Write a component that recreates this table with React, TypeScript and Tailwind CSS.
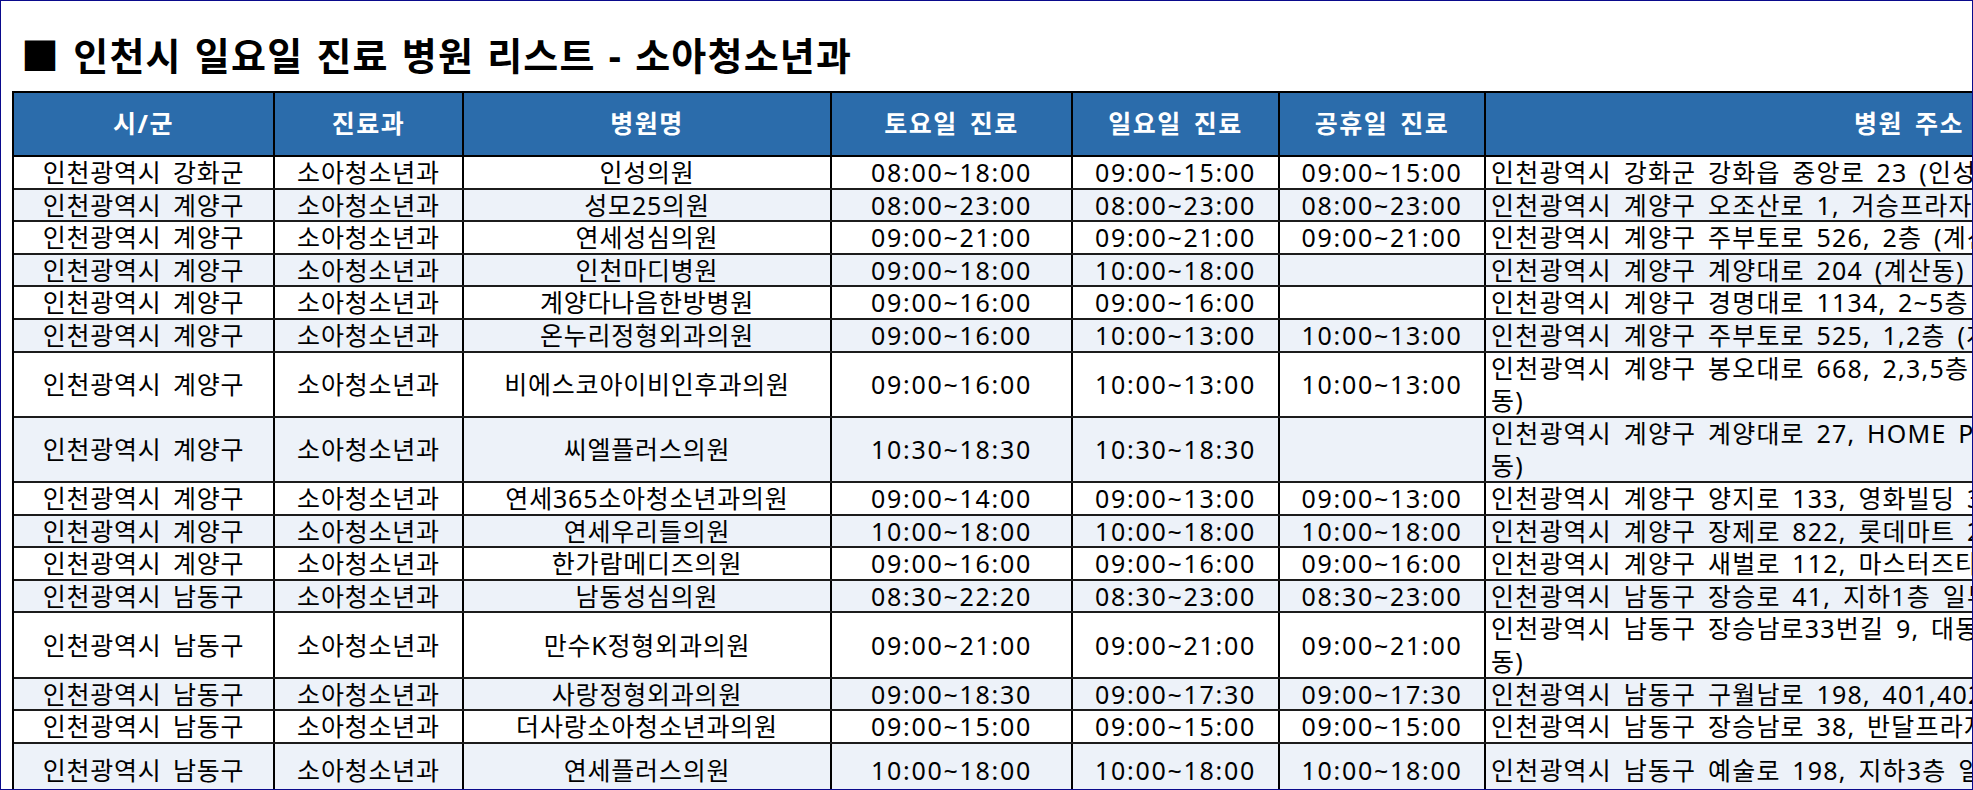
import React from 'react';

type Row = {
  gu: string;
  name: string;
  sat: string;
  sun: string;
  hol: string;
  addr: string[];
  h: string;
  alt: boolean;
};

const S = 'h-[32.6px]';
const D = 'h-[65.2px]';

const rows: Row[] = [
  { gu: '인천광역시 강화군', name: '인성의원', sat: '08:00~18:00', sun: '09:00~15:00', hol: '09:00~15:00', addr: ['인천광역시 강화군 강화읍 중앙로 23 (인성빌딩, 관청리)'], h: S, alt: false },
  { gu: '인천광역시 계양구', name: '성모25의원', sat: '08:00~23:00', sun: '08:00~23:00', hol: '08:00~23:00', addr: ['인천광역시 계양구 오조산로 1, 거승프라자 2층 (계산동)'], h: S, alt: true },
  { gu: '인천광역시 계양구', name: '연세성심의원', sat: '09:00~21:00', sun: '09:00~21:00', hol: '09:00~21:00', addr: ['인천광역시 계양구 주부토로 526, 2층 (계산동)'], h: S, alt: false },
  { gu: '인천광역시 계양구', name: '인천마디병원', sat: '09:00~18:00', sun: '10:00~18:00', hol: '', addr: ['인천광역시 계양구 계양대로 204 (계산동)'], h: S, alt: true },
  { gu: '인천광역시 계양구', name: '계양다나음한방병원', sat: '09:00~16:00', sun: '09:00~16:00', hol: '', addr: ['인천광역시 계양구 경명대로 1134, 2~5층 (계산동)'], h: S, alt: false },
  { gu: '인천광역시 계양구', name: '온누리정형외과의원', sat: '09:00~16:00', sun: '10:00~13:00', hol: '10:00~13:00', addr: ['인천광역시 계양구 주부토로 525, 1,2층 (계산동)'], h: S, alt: true },
  { gu: '인천광역시 계양구', name: '비에스코아이비인후과의원', sat: '09:00~16:00', sun: '10:00~13:00', hol: '10:00~13:00', addr: ['인천광역시 계양구 봉오대로 668, 2,3,5층 일부호 (효성빌딩, 효성', '동)'], h: D, alt: false },
  { gu: '인천광역시 계양구', name: '씨엘플러스의원', sat: '10:30~18:30', sun: '10:30~18:30', hol: '', addr: ['인천광역시 계양구 계양대로 27, HOME PLUS 2층 일부호 (작전', '동)'], h: D, alt: true },
  { gu: '인천광역시 계양구', name: '연세365소아청소년과의원', sat: '09:00~14:00', sun: '09:00~13:00', hol: '09:00~13:00', addr: ['인천광역시 계양구 양지로 133, 영화빌딩 3층 (동양동)'], h: S, alt: false },
  { gu: '인천광역시 계양구', name: '연세우리들의원', sat: '10:00~18:00', sun: '10:00~18:00', hol: '10:00~18:00', addr: ['인천광역시 계양구 장제로 822, 롯데마트 2층 (계산동)'], h: S, alt: true },
  { gu: '인천광역시 계양구', name: '한가람메디즈의원', sat: '09:00~16:00', sun: '09:00~16:00', hol: '09:00~16:00', addr: ['인천광역시 계양구 새벌로 112, 마스터즈타워 2층 (박촌동)'], h: S, alt: false },
  { gu: '인천광역시 남동구', name: '남동성심의원', sat: '08:30~22:20', sun: '08:30~23:00', hol: '08:30~23:00', addr: ['인천광역시 남동구 장승로 41, 지하1층 일부호 (만수동)'], h: S, alt: true },
  { gu: '인천광역시 남동구', name: '만수K정형외과의원', sat: '09:00~21:00', sun: '09:00~21:00', hol: '09:00~21:00', addr: ['인천광역시 남동구 장승남로33번길 9, 대동빌딩 2층 (만수', '동)'], h: D, alt: false },
  { gu: '인천광역시 남동구', name: '사랑정형외과의원', sat: '09:00~18:30', sun: '09:00~17:30', hol: '09:00~17:30', addr: ['인천광역시 남동구 구월남로 198, 401,402호 (구월동)'], h: S, alt: true },
  { gu: '인천광역시 남동구', name: '더사랑소아청소년과의원', sat: '09:00~15:00', sun: '09:00~15:00', hol: '09:00~15:00', addr: ['인천광역시 남동구 장승남로 38, 반달프라자 3층 (만수동)'], h: S, alt: false },
  { gu: '인천광역시 남동구', name: '연세플러스의원', sat: '10:00~18:00', sun: '10:00~18:00', hol: '10:00~18:00', addr: ['인천광역시 남동구 예술로 198, 지하3층 일부호 (구월동)'], h: 'h-[56px]', alt: true },
];

const cell = 'shrink-0 flex items-center justify-center border-r-2 border-black';
const text = `${cell} tracking-[0.8px]`;
const time = `${cell} tracking-[1.7px]`;

export default function App() {
  return (
    <div className="h-[790px] w-full overflow-hidden border border-[#0a0a8c] bg-white font-['Noto_Sans','Noto_Sans_CJK_KR',sans-serif] text-black">
      {/* 제목 */}
      <div className="h-[90px] pl-[20px] pt-[32px] whitespace-nowrap text-[38px] font-bold leading-[44px] tracking-[1.2px] [word-spacing:2px]">
        ■ 인천시 일요일 진료 병원 리스트 - 소아청소년과
      </div>

      <div className="ml-[11px] w-max border-l-2 border-t-2 border-black">
        {/* 헤더 */}
        <div className="flex h-[64px] border-b-2 border-black bg-[#2b6cab] text-[25px] font-bold text-white tracking-[1.5px] [word-spacing:4px]">
          <div className={`${cell} w-[261px]`}>시/군</div>
          <div className={`${cell} w-[189px]`}>진료과</div>
          <div className={`${cell} w-[368px]`}>병원명</div>
          <div className={`${cell} w-[241px]`}>토요일 진료</div>
          <div className={`${cell} w-[207px]`}>일요일 진료</div>
          <div className={`${cell} w-[206px]`}>공휴일 진료</div>
          <div className={`${cell} w-[848px]`}>병원 주소</div>
        </div>

        {rows.map((r, i) => (
          <div
            key={i}
            className={`flex ${r.h} border-b-2 border-[#1c1c1c] text-[25px] leading-[32.6px] [word-spacing:4px] ${
              r.alt ? 'bg-[#edf2f9]' : 'bg-white'
            }`}
          >
            <div className={`${text} w-[261px]`}>{r.gu}</div>
            <div className={`${text} w-[189px]`}>소아청소년과</div>
            <div className={`${text} w-[368px] whitespace-nowrap`}>{r.name}</div>
            <div className={`${time} w-[241px]`}>{r.sat}</div>
            <div className={`${time} w-[207px]`}>{r.sun}</div>
            <div className={`${time} w-[206px]`}>{r.hol}</div>
            <div className="flex w-[848px] shrink-0 flex-col justify-center overflow-hidden whitespace-nowrap border-r-2 border-black pl-[5px] tracking-[1.2px]">
              {r.addr.map((line, j) => (
                <span key={j}>{line}</span>
              ))}
            </div>
          </div>
        ))}
      </div>
    </div>
  );
}
